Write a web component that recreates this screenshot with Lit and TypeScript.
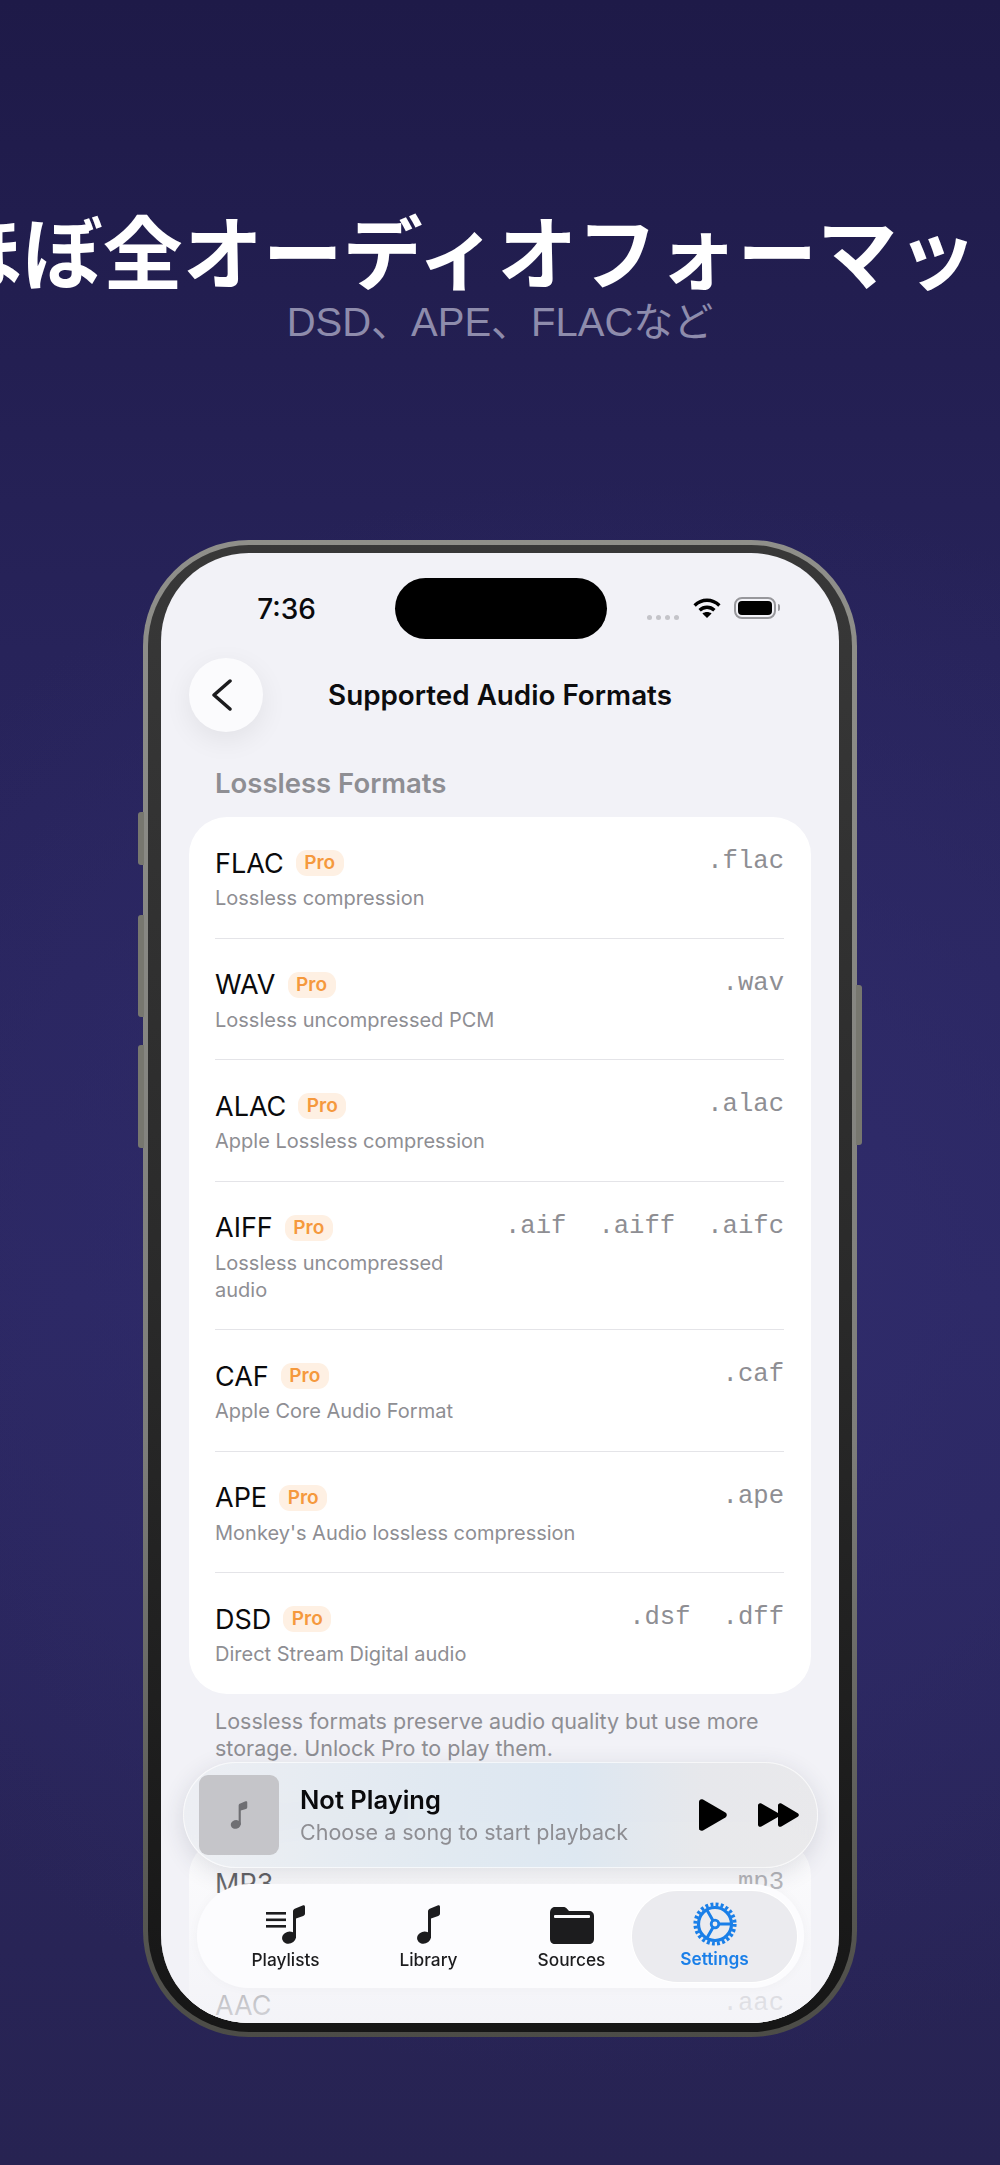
import { LitElement, html, css, svg } from "lit";
import { customElement } from "lit/decorators.js";

type Row = { name: string; desc: string; exts: string[]; narrow?: boolean; free?: boolean };

const LOSSLESS: Row[] = [
  { name: "FLAC", desc: "Lossless compression", exts: [".flac"] },
  { name: "WAV", desc: "Lossless uncompressed PCM", exts: [".wav"] },
  { name: "ALAC", desc: "Apple Lossless compression", exts: [".alac"] },
  { name: "AIFF", desc: "Lossless uncompressed audio", exts: [".aif", ".aiff", ".aifc"], narrow: true },
  { name: "CAF", desc: "Apple Core Audio Format", exts: [".caf"] },
  { name: "APE", desc: "Monkey's Audio lossless compression", exts: [".ape"] },
  { name: "DSD", desc: "Direct Stream Digital audio", exts: [".dsf", ".dff"] },
];
const LOSSY: Row[] = [
  { name: "MP3", desc: "MPEG Audio Layer III", exts: [".mp3"], free: true },
  { name: "AAC", desc: "Advanced Audio Coding", exts: [".aac"], free: true },
];

const noteShape = svg`<ellipse cx="7" cy="32.6" rx="7" ry="6" transform="rotate(-18 7 32.6)"/><path d="M11 33V6.500c0-1.600.8-2.600 2.300-3.100L20.600.4C22.200-.1 23 .6 23 2v6.600c0 1.300-.6 2-1.800 2.400L14 13.400V33z"/>`;

@customElement("app-root")
export class AppRoot extends LitElement {
  static styles = css`
    :host {
      display: block;
      width: 1000px;
      height: 2165px;
      overflow: hidden;
      font-family: Inter, "Noto Sans CJK JP", sans-serif;
      background:
        radial-gradient(ellipse 900px 800px at 620px 1280px, #302c6c 0%, rgba(48, 44, 108, 0) 100%),
        linear-gradient(180deg, #1e1a48 0%, #27235a 30%, #2b2762 60%, #272352 100%);
    }
    .hero { padding-top: 208px; }
    .title {
      display: flex;
      justify-content: center;
      height: 80px;
      line-height: 80px;
      font-size: 80px;
      font-weight: 700;
      color: #fff;
      white-space: nowrap;
      font-family: "Noto Sans CJK JP", sans-serif;
    }
    .subtitle {
      margin-top: 9px;
      text-align: center;
      height: 50px;
      line-height: 50px;
      font-size: 40px;
      color: #8e8cac;
      font-family: "Liberation Sans", "Noto Sans CJK JP", sans-serif;
    }
    .phone {
      position: relative;
      width: 714px;
      height: 1497px;
      box-sizing: border-box;
      margin: 193px auto 0;
      padding: 5px;
      border-radius: 106px;
      background: linear-gradient(180deg, #8f8f8a 0%, #7e7e7a 60%, #4c4c47 100%);
    }
    .btn {
      position: absolute;
      width: 6px;
      background: #77776f;
      border-radius: 3px 0 0 3px;
    }
    .btn.l { left: -5px; }
    .btn.r { right: -5px; border-radius: 0 3px 3px 0; }
    .bezel {
      height: 100%;
      box-sizing: border-box;
      padding: 8px 13px 9px;
      border-radius: 101px;
      background: linear-gradient(180deg, #383838 0%, #2a2a2a 50%, #161616 100%);
    }
    .screen {
      position: relative;
      height: 100%;
      overflow: hidden;
      border-radius: 88px;
      background: #f2f2f7;
      color: #0a0a0c;
    }
    .status {
      display: grid;
      grid-template-columns: 234px 212px 1fr;
      align-items: center;
      padding-top: 24px;
      height: 61px;
    }
    .time {
      text-align: right;
      padding-right: 79px;
      font-size: 28px;
      font-weight: 500;
      line-height: 61px;
      margin-top: 2px;
      white-space: nowrap;
    }
    .island { height: 61px; background: #000; border-radius: 31px; }
    .indicators { display: flex; align-items: center; padding-left: 40px; margin-top: -2px; }
    .dots { display: flex; gap: 3.6px; margin-top: 20px; width: 46px; height: 5px; }
    .dots i { width: 5.4px; height: 5.4px; border-radius: 50%; background: #c4c4c9; }
    .batt {
      display: flex;
      box-sizing: border-box;
      width: 42px;
      height: 22px;
      margin-left: 13px;
      padding: 2px;
      border: 2px solid #98989c;
      border-radius: 8px;
    }
    .batt i { flex: 1; background: #000; border-radius: 4px; }
    .nub { width: 2px; height: 7px; margin-left: 2px; background: #98989c; border-radius: 0 2px 2px 0; }
    .nav {
      display: grid;
      grid-template-columns: 74px 1fr 74px;
      align-items: center;
      margin: 20px 28px 0;
    }
    .back {
      display: flex;
      align-items: center;
      justify-content: center;
      width: 74px;
      height: 74px;
      padding-right: 8px;
      box-sizing: border-box;
      border-radius: 50%;
      background: #fbfbfd;
      box-shadow: 0 8px 28px rgba(0, 0, 0, 0.07);
    }
    .nav-title { text-align: center; font-size: 27.8px; font-weight: 600; color: #0c0c0e; white-space: nowrap; }
    .sec {
      margin: 34px 28px 17px;
      padding-left: 26px;
      height: 34px;
      line-height: 34px;
      font-size: 27.5px;
      font-weight: 600;
      color: #8e8e93;
    }
    .card { margin: 0 28px; padding: 0 27px 0 26px; background: #fff; border-radius: 38px; }
    .row {
      display: flex;
      justify-content: space-between;
      gap: 20px;
      padding: 28px 0 25.5px;
      border-bottom: 1px solid #e4e4e8;
    }
    .row:last-child { border-bottom: 0; }
    .main { flex: 1; min-width: 0; }
    .name-line { display: flex; align-items: center; height: 36px; gap: 12px; margin-bottom: 4px; }
    .name { font-size: 27px; color: #0a0a0c; line-height: 36px; margin-top: 1px; }
    .badge {
      width: 48px;
      height: 26px;
      line-height: 26px;
      text-align: center;
      border-radius: 11px;
      background: #fef0e3;
      color: #f5993d;
      font-size: 19px;
      font-weight: 600;
    }
    .desc { font-size: 20px; line-height: 27px; color: #8e8e93; }
    .narrow .desc { width: 250px; }
    .exts { display: flex; gap: 32px; height: 30px; line-height: 30px; flex: none; padding-top: 2px; }
    .exts span { font-family: "Liberation Mono", monospace; font-size: 25.6px; color: #8e8e93; }
    .foot {
      margin: 14px 28px 0;
      padding: 0 26px;
      font-size: 21.5px;
      line-height: 27px;
      color: #8e8e93;
    }
    .sec2 { margin-top: 37px; margin-bottom: 0; height: 39px; }
    .fade {
      position: absolute;
      left: 0;
      right: 0;
      bottom: 0;
      height: 170px;
      background: linear-gradient(180deg, rgba(242, 242, 247, 0.3), rgba(242, 242, 247, 0.88));
    }
    .player {
      position: absolute;
      left: 22px;
      width: 635px;
      height: 106px;
      bottom: 155px;
      box-sizing: border-box;
      display: flex;
      align-items: center;
      padding-left: 15px;
      border-radius: 53px;
      border: 1.5px solid rgba(255, 255, 255, 0.65);
      background: linear-gradient(90deg, rgba(236, 238, 242, 0.92) 0%, rgba(223, 232, 240, 0.92) 40%, rgba(219, 230, 240, 0.92) 62%, rgba(230, 231, 234, 0.92) 82%, rgba(232, 232, 234, 0.92) 100%);
      backdrop-filter: blur(14px);
      box-shadow: 0 6px 24px rgba(40, 50, 70, 0.14);
    }
    .thumb {
      display: flex;
      align-items: center;
      justify-content: center;
      flex: none;
      width: 80px;
      height: 80px;
      border-radius: 9px;
      background: #c5c5c9;
    }
    .meta { flex: 1; margin-left: 21px; padding-top: 2px; }
    .np { font-size: 25.5px; font-weight: 600; line-height: 30px; color: #0a0a0c; }
    .ns { font-size: 21.5px; line-height: 30px; margin-top: 2px; color: #8e8e93; }
    .ctl { display: flex; align-items: center; gap: 31px; padding-right: 18px; }
    .tabs {
      position: absolute;
      left: 36px;
      width: 607px;
      height: 104px;
      bottom: 35px;
      box-sizing: border-box;
      padding-left: 17px;
      display: grid;
      grid-template-columns: repeat(4, 143px);
      border-radius: 52px;
      background: #fcfcfe;
      box-shadow: 0 0 12px rgba(0, 0, 0, 0.03);
    }
    .tab {
      position: relative;
      display: flex;
      flex-direction: column;
      align-items: center;
      font-size: 17.3px;
      font-weight: 500;
      color: #1c1c1e;
    }
    .tab svg { position: relative; margin-top: 21px; height: 39px; }
    .tab span { position: relative; margin-top: 5px; line-height: 22px; white-space: nowrap; }
    .tab.on { color: #1a7fe8; font-weight: 600; }
    .pill {
      position: absolute;
      left: -11px;
      right: -11px;
      top: 7px;
      bottom: 6px;
      border-radius: 46px;
      background: #ebebef;
      box-shadow: 0 0 0 1px #fff;
    }
  `;

  private renderRow(r: Row) {
    return html`<div class="row ${r.narrow ? "narrow" : ""}">
      <div class="main">
        <div class="name-line">
          <span class="name">${r.name}</span>
          ${r.free ? "" : html`<span class="badge">Pro</span>`}
        </div>
        <div class="desc">${r.desc}</div>
      </div>
      <div class="exts">${r.exts.map((e) => html`<span>${e}</span>`)}</div>
    </div>`;
  }

  private gear() {
    return html`<svg width="44" height="44" viewBox="0 0 44 44" fill="none" stroke="#1a7fe8" style="height:44px;margin-top:18px;margin-bottom:-3px">
      <circle cx="22" cy="22" r="19.6" stroke-width="4" stroke-dasharray="2.9 2.23"/>
      <circle cx="22" cy="22" r="16.5" stroke-width="3.2"/>
      <circle cx="22" cy="22" r="3.8" stroke-width="2.8"/>
      <path d="M25.8 22H38M20.1 18.7 13.8 7.800M20.1 25.300 13.8 36.200" stroke-width="3"/>
    </svg>`;
  }

  render() {
    return html`
      <div class="hero">
        <div class="title">ほぼ全オーディオフォーマット</div>
        <div class="subtitle">DSD、APE、FLACなど</div>
      </div>
      <div class="phone">
        <div class="btn l" style="top:272px;height:53px"></div>
        <div class="btn l" style="top:375px;height:102px"></div>
        <div class="btn l" style="top:505px;height:103px"></div>
        <div class="btn r" style="top:445px;height:160px"></div>
        <div class="bezel">
          <div class="screen">
            <div class="status">
              <div class="time">7:36</div>
              <div class="island"></div>
              <div class="indicators">
                <div class="dots"><i></i><i></i><i></i><i></i></div>
                <svg width="28" height="20" viewBox="0 0 28 20" fill="none" stroke="#000" stroke-width="3.4">
                  <path d="M1.600 7.400C8.800.6 19.200.6 26.400 7.400"/>
                  <path d="M6.600 12.200c4.300-4 10.500-4 14.800 0"/>
                  <path d="M14 20l-4.600-4.600c2.600-2 6.600-2 9.200 0z" fill="#000" stroke="none"/>
                </svg>
                <div class="batt"><i></i></div>
                <div class="nub"></div>
              </div>
            </div>
            <div class="nav">
              <div class="back">
                <svg width="22" height="32" viewBox="0 0 22 32" fill="none" stroke="#1c1c1e" stroke-width="3.500" stroke-linecap="round" stroke-linejoin="round">
                  <path d="M19 2 3 16l16 14"/>
                </svg>
              </div>
              <div class="nav-title">Supported Audio Formats</div>
              <div></div>
            </div>
            <div class="sec">Lossless Formats</div>
            <div class="card">${LOSSLESS.map((r) => this.renderRow(r))}</div>
            <div class="foot">Lossless formats preserve audio quality but use more storage. Unlock Pro to play them.</div>
            <div class="sec sec2">Lossy Formats</div>
            <div class="card">${LOSSY.map((r) => this.renderRow(r))}</div>

            <div class="fade"></div>
            <div class="player">
              <div class="thumb">
                <svg width="18" height="28" viewBox="0 0 23 39" fill="#6f6f73">${noteShape}</svg>
              </div>
              <div class="meta">
                <div class="np">Not Playing</div>
                <div class="ns">Choose a song to start playback</div>
              </div>
              <div class="ctl">
                <svg width="28" height="32" viewBox="0 0 28 32" fill="#000"><path d="M0 3C0 .8 2-.5 4 .6l22.400 13c1.800 1.100 1.800 3.700 0 4.800L4 31.400C2 32.500 0 31.200 0 29z"/></svg>
                <svg width="41" height="24" viewBox="0 0 41 24" fill="#000"><path d="M0 2.500C0 .6 1.800-.4 3.400.6L20 10V2.500C20 .6 21.800-.4 23.400.6L39.800 10.200c1.400.8 1.400 2.800 0 3.600L23.400 23.400C21.800 24.400 20 23.400 20 21.500V14L3.400 23.400C1.800 24.400 0 23.400 0 21.500z"/></svg>
              </div>
            </div>
            <div class="tabs">
              <div class="tab">
                <svg width="40" height="39" viewBox="0 0 40 39" fill="#1c1c1e">
                  <rect x="0" y="7" width="20" height="2.600"/><rect x="0" y="13.500" width="20" height="2.600"/><rect x="0" y="20" width="20" height="2.600"/>
                  <g transform="translate(16 0)">${noteShape}</g>
                </svg>
                <span>Playlists</span>
              </div>
              <div class="tab">
                <svg width="23" height="39" viewBox="0 0 23 39" fill="#1c1c1e">${noteShape}</svg>
                <span>Library</span>
              </div>
              <div class="tab">
                <svg width="44" height="39" viewBox="0 0 44 39" fill="#1c1c1e">
                  <path d="M0 8C0 4.500 1.800 2 5 2h8c2 0 3 .6 4 1.800L19 6h20c3 0 5 2 5 5v23c0 3-2 5-5 5H5c-3 0-5-2-5-5z"/>
                  <rect x="4" y="10" width="36" height="3" rx="1" fill="#fcfcfe"/>
                </svg>
                <span>Sources</span>
              </div>
              <div class="tab on">
                <div class="pill"></div>
                ${this.gear()}
                <span>Settings</span>
              </div>
            </div>
          </div>
        </div>
      </div>
    `;
  }
}
